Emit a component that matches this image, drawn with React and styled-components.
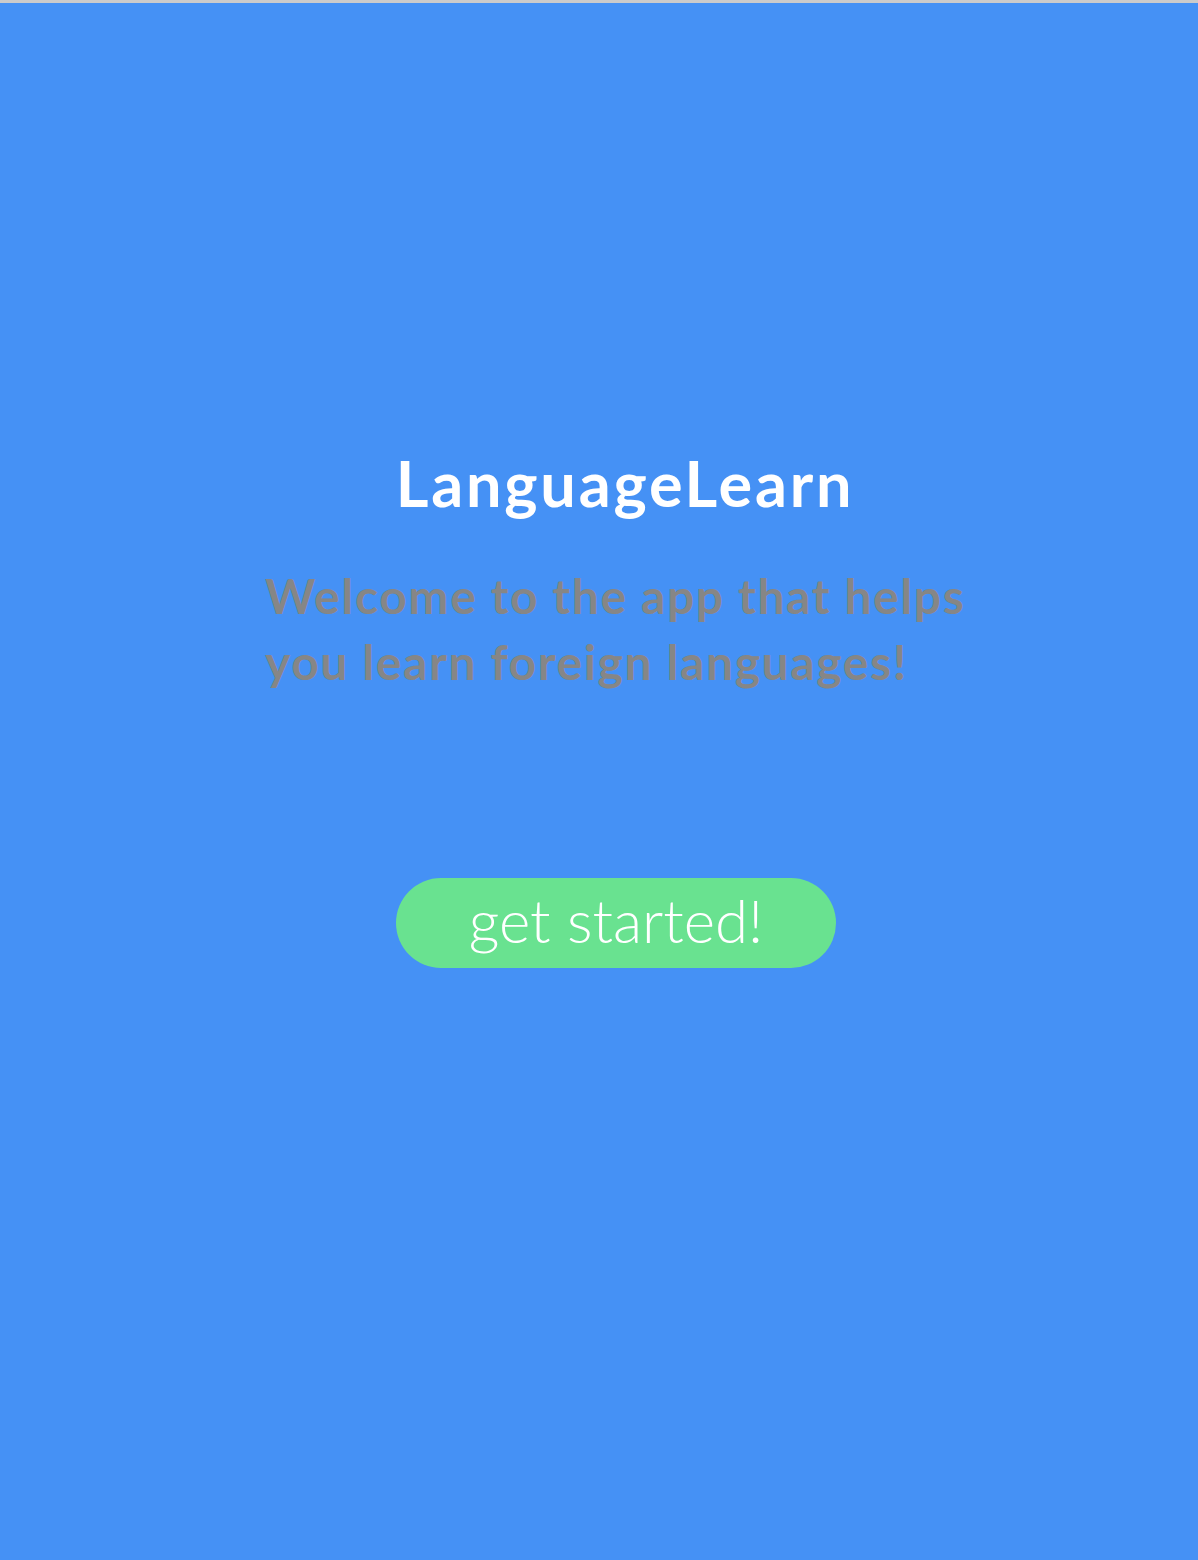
import React from 'react'
import styled, { createGlobalStyle } from 'styled-components'

const GlobalStyle = createGlobalStyle`
  html,
  body {
    margin: 0;
    padding: 0;
    background: #4591f5;
  }
`

const Page = styled.div`
  box-sizing: border-box;
  width: 100%;
  min-height: 1560px;
  border-top: 3px solid #cbcbcb;
  background: #4591f5;
  display: flex;
  flex-direction: column;
  align-items: center;
  padding-top: 440px;
  padding-left: 52px;
  font-family: Lato, 'Noto Sans', sans-serif;
`

const Title = styled.h1`
  margin: 0;
  color: #ffffff;
  font-size: 63px;
  font-weight: 700;
  line-height: 80px;
  letter-spacing: 2.8px;
`

const Intro = styled.p`
  margin: 40px 0 0;
  width: 720px;
  color: #868686;
  font-size: 48px;
  font-weight: 700;
  line-height: 66px;
  letter-spacing: 1.6px;
  text-align: left;
`

const StartButton = styled.button`
  margin: 183px 18px 0 0;
  width: 440px;
  height: 90px;
  border: none;
  border-radius: 45px;
  background: #69e290;
  color: #ffffff;
  font-family: Lato, 'Noto Sans', sans-serif;
  font-size: 60px;
  font-weight: 300;
  line-height: 80px;
  padding: 0 0 6px;
  cursor: pointer;
`

const App = () => (
  <>
    <GlobalStyle />
    <Page>
      <Title>LanguageLearn</Title>
      <Intro>
        Welcome to the app that helps you learn foreign languages!
      </Intro>
      <StartButton>get started!</StartButton>
    </Page>
  </>
)

export default App
